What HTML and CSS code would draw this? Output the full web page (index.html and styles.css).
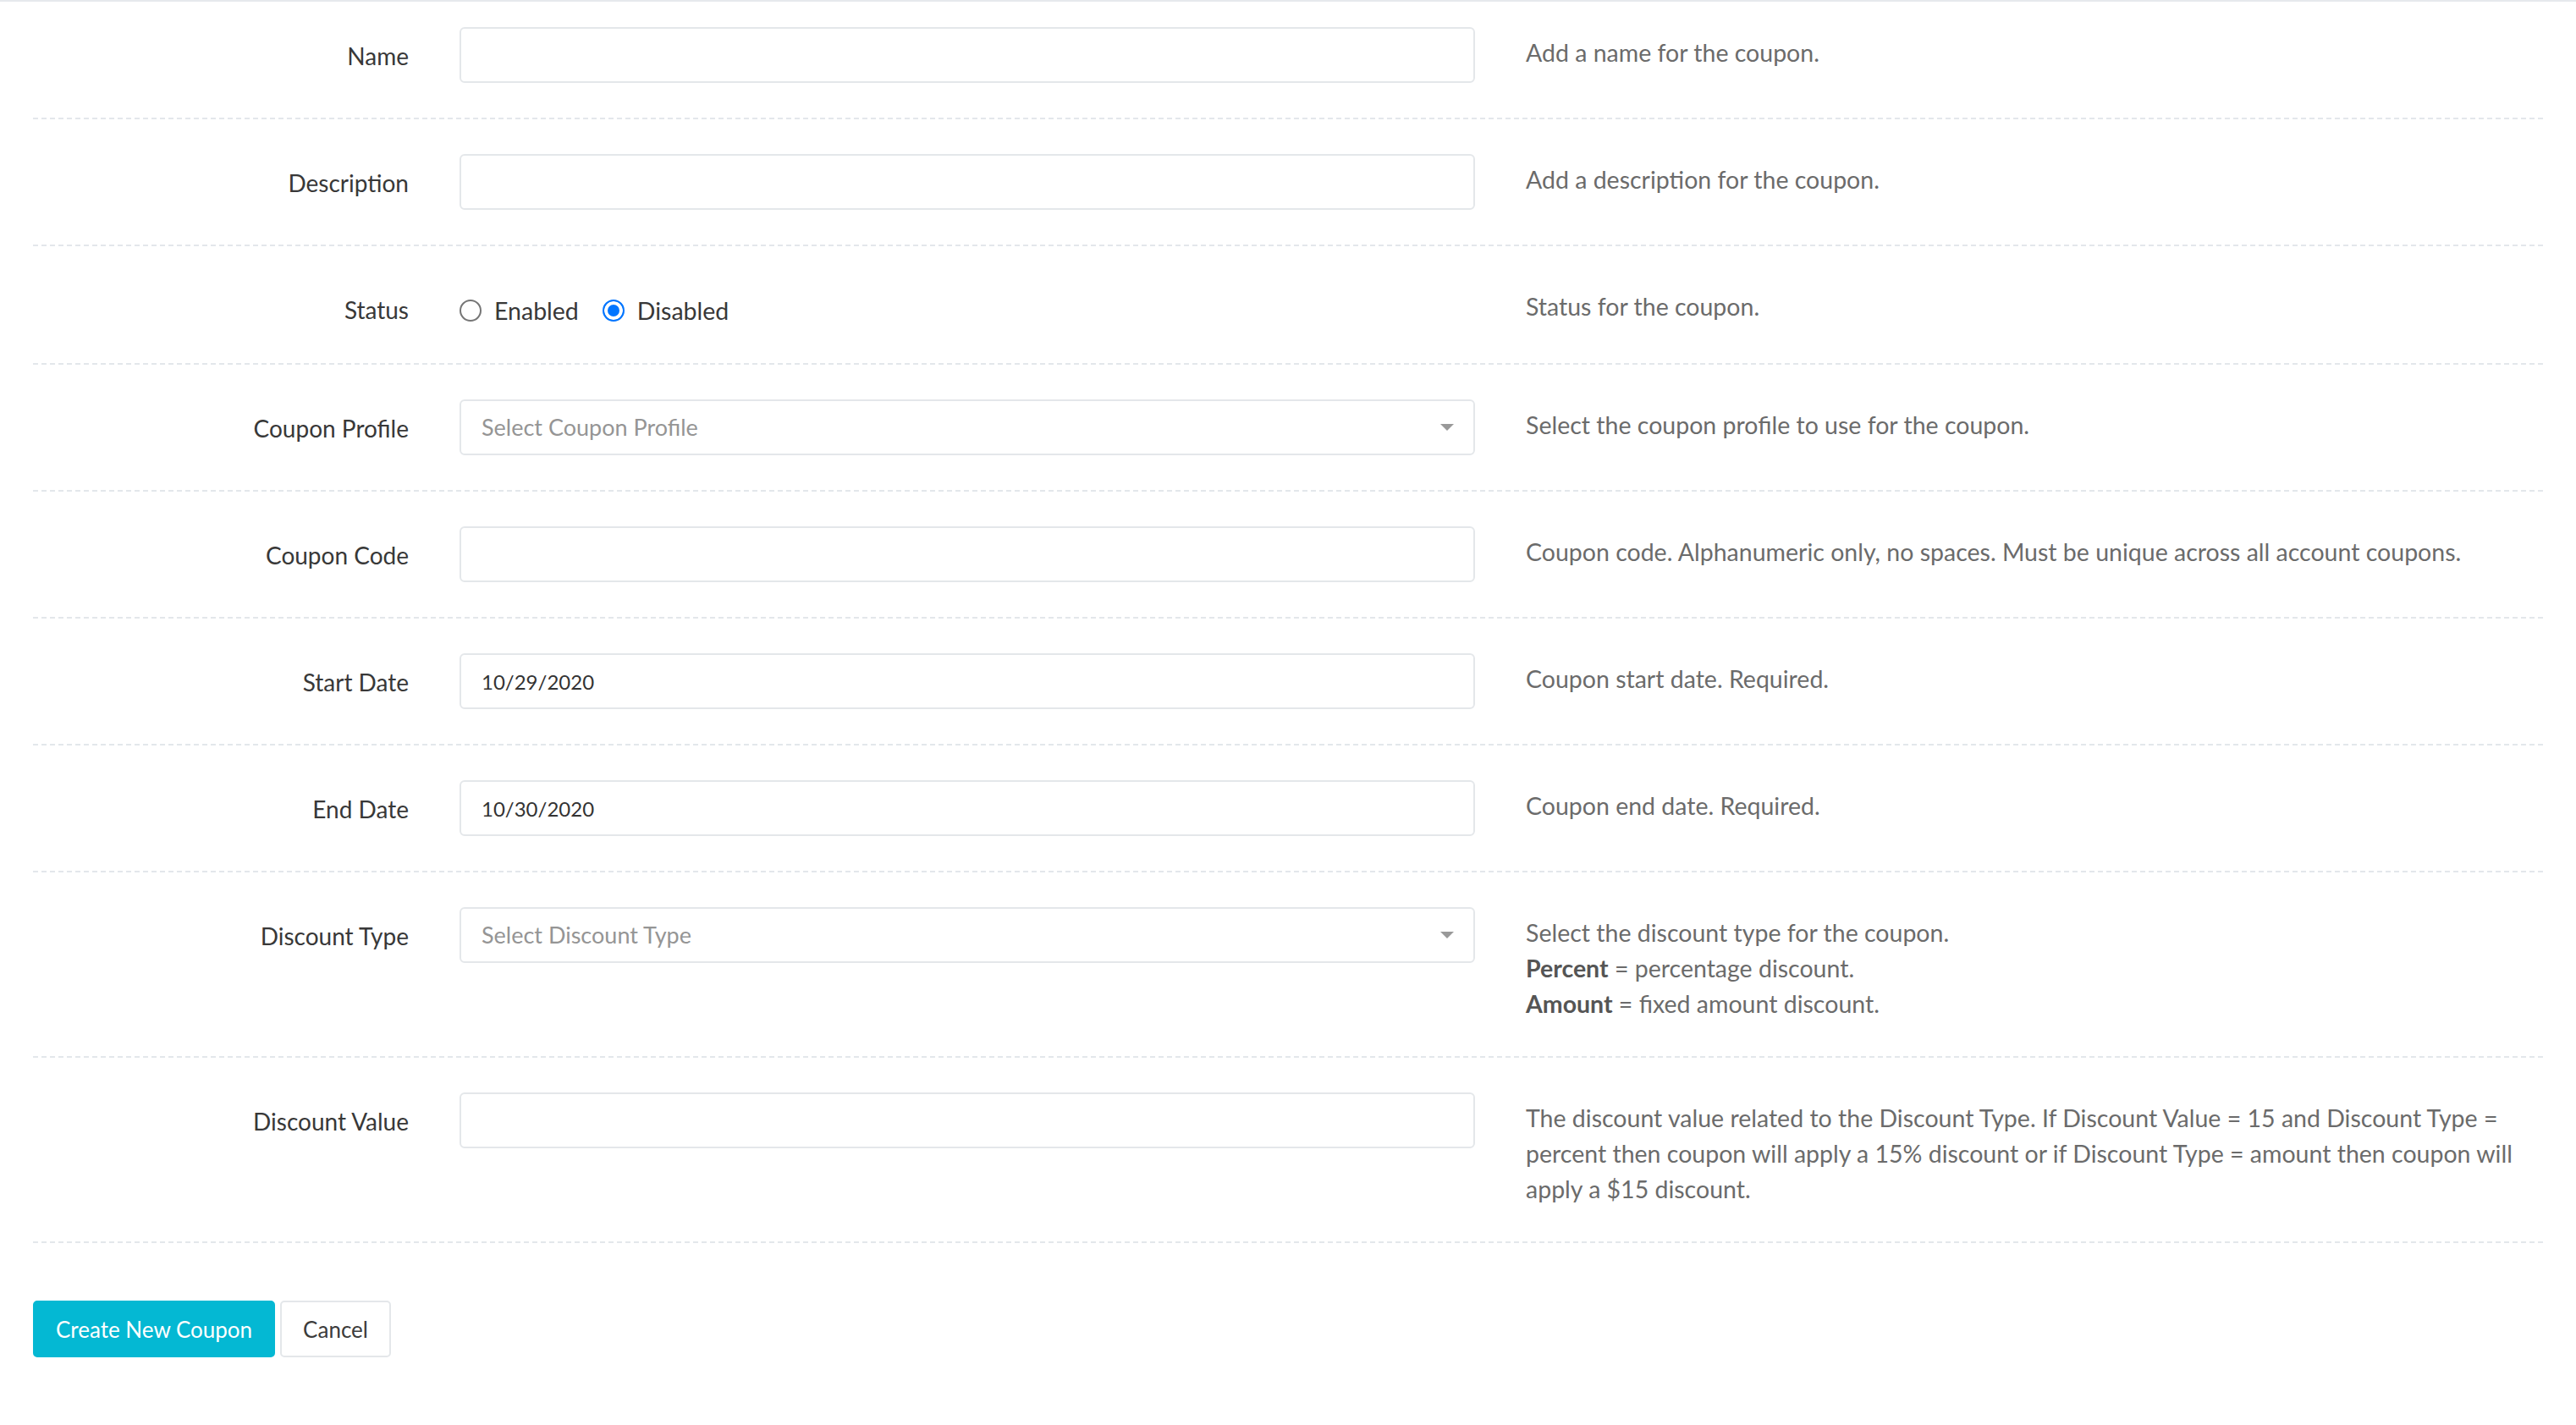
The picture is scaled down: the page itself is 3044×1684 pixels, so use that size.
FILE: index.html
```html
<!DOCTYPE html>
<html lang="en">
<head>
    <meta charset="UTF-8">
    <meta name="viewport" content="width=device-width, initial-scale=1.0">
    <title>Create Coupon</title>
    <link rel="stylesheet" href="styles.css">
</head>
<body>
    <div class="page">
        <form class="coupon-form">
            <div class="form-row">
                <label class="field-label" for="coupon-name">Name</label>
                <div class="field">
                    <input class="text-input" type="text" id="coupon-name">
                </div>
                <p class="field-help">Add a name for the coupon.</p>
            </div>
            <div class="form-row">
                <label class="field-label" for="coupon-description">Description</label>
                <div class="field">
                    <input class="text-input" type="text" id="coupon-description">
                </div>
                <p class="field-help">Add a description for the coupon.</p>
            </div>
            <div class="form-row">
                <label class="field-label">Status</label>
                <div class="field radio-group">
                    <label class="radio-option"><input type="radio" name="status" value="enabled"> Enabled</label>
                    <label class="radio-option"><input type="radio" name="status" value="disabled" checked> Disabled</label>
                </div>
                <p class="field-help">Status for the coupon.</p>
            </div>
            <div class="form-row">
                <label class="field-label">Coupon Profile</label>
                <div class="field">
                    <div class="select-box">
                        <span class="select-placeholder">Select Coupon Profile</span>
                        <span class="select-arrow"></span>
                    </div>
                </div>
                <p class="field-help">Select the coupon profile to use for the coupon.</p>
            </div>
            <div class="form-row">
                <label class="field-label" for="coupon-code">Coupon Code</label>
                <div class="field">
                    <input class="text-input" type="text" id="coupon-code">
                </div>
                <p class="field-help">Coupon code. Alphanumeric only, no spaces. Must be unique across all account coupons.</p>
            </div>
            <div class="form-row">
                <label class="field-label" for="start-date">Start Date</label>
                <div class="field">
                    <input class="text-input" type="text" id="start-date" value="10/29/2020">
                </div>
                <p class="field-help">Coupon start date. Required.</p>
            </div>
            <div class="form-row">
                <label class="field-label" for="end-date">End Date</label>
                <div class="field">
                    <input class="text-input" type="text" id="end-date" value="10/30/2020">
                </div>
                <p class="field-help">Coupon end date. Required.</p>
            </div>
            <div class="form-row">
                <label class="field-label">Discount Type</label>
                <div class="field">
                    <div class="select-box">
                        <span class="select-placeholder">Select Discount Type</span>
                        <span class="select-arrow"></span>
                    </div>
                </div>
                <p class="field-help">
                    Select the discount type for the coupon.<br>
                    <strong>Percent</strong> = percentage discount.<br>
                    <strong>Amount</strong> = fixed amount discount.
                </p>
            </div>
            <div class="form-row">
                <label class="field-label" for="discount-value">Discount Value</label>
                <div class="field">
                    <input class="text-input" type="text" id="discount-value">
                </div>
                <p class="field-help">The discount value related to the Discount Type. If Discount Value = 15 and Discount Type = percent then coupon will apply a 15% discount or if Discount Type = amount then coupon will apply a $15 discount.</p>
            </div>
            <div class="form-actions">
                <button type="submit" class="btn btn-primary">Create New Coupon</button>
                <button type="button" class="btn btn-default">Cancel</button>
            </div>
        </form>
    </div>
</body>
</html>
```

FILE: styles.css
```css
body {
    margin: 0;
    font-family: Lato, "Liberation Sans", sans-serif;
    font-size: 28.5px;
    line-height: 42px;
    color: #383838;
    background-color: white;
}

.page {
    border-top: 2px solid #e6e9ed;
    padding: 0 39px;
}

.form-row {
    display: grid;
    grid-template-columns: 444px 1200px 1fr;
    column-gap: 60px;
    align-items: start;
    padding: 41px 0 43px;
    background-image: linear-gradient(to right, #e3e7eb 60%, transparent 60%);
    background-size: 10px 2px;
    background-repeat: repeat-x;
    background-position: left bottom;
}

.form-row:first-child {
    padding-top: 30px;
}

.field-label {
    text-align: right;
    padding-top: 13px;
    font-size: 28px;
}

.field-help {
    margin: 0;
    padding-top: 9px;
    color: #6b6b6b;
}

.field-help strong {
    color: #555;
}

.text-input {
    box-sizing: border-box;
    display: block;
    width: 100%;
    height: 66px;
    border: 2px solid #e4e7ea;
    border-radius: 6px;
    padding: 0 24px;
    font: inherit;
    font-size: 24px;
    color: #333;
    background-color: white;
}

.select-box {
    box-sizing: border-box;
    display: flex;
    align-items: center;
    justify-content: space-between;
    height: 66px;
    border: 2px solid #e4e7ea;
    border-radius: 6px;
    padding: 0 23px 0 24px;
    font-size: 27px;
}

.select-placeholder {
    color: #959595;
}

.select-arrow {
    width: 0;
    height: 0;
    border-left: 8px solid transparent;
    border-right: 8px solid transparent;
    border-top: 8px solid #999;
}

.radio-group {
    display: flex;
    align-items: center;
    gap: 28px;
    padding-top: 14px;
}

.radio-option {
    display: flex;
    align-items: center;
    gap: 15px;
}

.radio-option input {
    appearance: none;
    box-sizing: border-box;
    width: 26px;
    height: 26px;
    margin: 0;
    border: 2px solid #767676;
    border-radius: 50%;
    background-color: white;
}

.radio-option input:checked {
    border-color: #0075ff;
    background-color: #0075ff;
    box-shadow: inset 0 0 0 4px white;
}

.form-actions {
    display: flex;
    gap: 6px;
    padding-top: 68px;
}

.btn {
    height: 67px;
    padding: 0 25px;
    border: 2px solid #e4e7ea;
    border-radius: 5px;
    font: inherit;
    font-size: 26px;
    cursor: pointer;
}

.btn-primary {
    background-color: #04b8d3;
    border-color: #04b8d3;
    color: white;
}

.btn-default {
    background-color: white;
    color: #3c3c3c;
}
```
